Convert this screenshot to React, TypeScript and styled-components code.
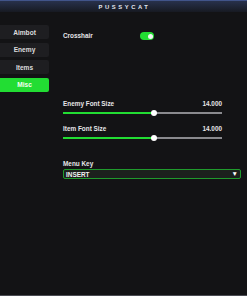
import styled, { createGlobalStyle } from "styled-components";

const GlobalStyle = createGlobalStyle`
  html, body {
    margin: 0;
    padding: 0;
    background: #121214;
  }
  #root {
    width: 247px;
    height: 296px;
  }
`;

const Window = styled.div`
  display: flex;
  flex-direction: column;
  width: 247px;
  height: 296px;
  box-sizing: border-box;
  background: #131315;
  border-bottom: 1px solid #4a4b52;
  font-family: "Liberation Sans", Arial, sans-serif;
  font-weight: 700;
  color: #e6e6e8;
  overflow: hidden;
`;

const TitleBar = styled.div`
  display: flex;
  align-items: center;
  justify-content: center;
  height: 12px;
  box-sizing: border-box;
  border-top: 1px solid #41548a;
  background: linear-gradient(#28314c, #171a22);
  font-size: 5.8px;
  letter-spacing: 2.6px;
  color: #e4e7ef;
  padding-left: 2px;
`;

const Main = styled.div`
  display: flex;
  flex: 1;
`;

const Sidebar = styled.div`
  display: flex;
  flex-direction: column;
  gap: 3.5px;
  width: 49px;
  padding-top: 13px;
`;

const TabButton = styled.div<{ $active?: boolean }>`
  display: flex;
  align-items: center;
  justify-content: center;
  height: 14px;
  border-radius: 0 2px 2px 0;
  font-size: 6.6px;
  background: ${(p) => (p.$active ? "#22dd33" : "#1e1e21")};
  color: ${(p) => (p.$active ? "#f4fff4" : "#dcdcde")};
`;

const Content = styled.div`
  display: flex;
  flex-direction: column;
  padding: 20px 0 0 14px;
`;

const ToggleRow = styled.div`
  display: flex;
  align-items: center;
  justify-content: space-between;
  width: 91px;
  height: 8px;
`;

const Label = styled.span`
  font-size: 6.4px;
  line-height: 8px;
`;

const Toggle = styled.div<{ $on?: boolean }>`
  position: relative;
  width: 14px;
  height: 8px;
  border-radius: 4px;
  background: ${(p) => (p.$on ? "#22dd33" : "#444")};

  &::after {
    content: "";
    position: absolute;
    top: 1.5px;
    left: ${(p) => (p.$on ? "8px" : "1.5px")};
    width: 5px;
    height: 5px;
    border-radius: 50%;
    background: #f4f4f4;
  }
`;

const SliderGroup = styled.div<{ $top: number }>`
  display: flex;
  flex-direction: column;
  width: 159px;
  margin-top: ${(p) => p.$top}px;
`;

const LabelRow = styled.div`
  display: flex;
  justify-content: space-between;
  height: 8px;
`;

const Track = styled.div`
  position: relative;
  height: 6px;
  margin-top: 2px;

  &::before {
    content: "";
    position: absolute;
    left: 0;
    right: 0;
    top: 2px;
    height: 2px;
    background: #8a8a8e;
  }
`;

const Fill = styled.div`
  position: absolute;
  left: 0;
  top: 2px;
  height: 2px;
  background: #22dd33;
`;

const Knob = styled.div`
  position: absolute;
  top: 0;
  width: 6px;
  height: 6px;
  margin-left: -3px;
  border-radius: 50%;
  background: #ffffff;
`;

const KeyGroup = styled.div`
  display: flex;
  flex-direction: column;
  width: 178px;
  margin-top: 19px;
`;

const Select = styled.div`
  display: flex;
  align-items: center;
  justify-content: space-between;
  height: 10px;
  margin-top: 1px;
  box-sizing: border-box;
  padding: 0 2px 0 2px;
  border: 1px solid #1f9a2c;
  border-radius: 2px;
  background: #1c201d;
  font-size: 6.4px;
  color: #f2f2f2;
`;

const Arrow = styled.span`
  font-size: 6.5px;
  line-height: 6px;
  color: #ffffff;
`;

const Slider = ({ label, value, min, max, top }: { label: string; value: number; min: number; max: number; top: number }) => {
  const pct = ((value - min) / (max - min)) * 100;
  return (
    <SliderGroup $top={top}>
      <LabelRow>
        <Label>{label}</Label>
        <Label>{value.toFixed(3)}</Label>
      </LabelRow>
      <Track>
        <Fill style={{ width: `${pct}%` }} />
        <Knob style={{ left: `${pct}%` }} />
      </Track>
    </SliderGroup>
  );
};

const tabs = ["Aimbot", "Enemy", "Items", "Misc"];

export default function App() {
  return (
    <>
      <GlobalStyle />
      <Window>
        <TitleBar>PUSSYCAT</TitleBar>
        <Main>
          <Sidebar>
            {tabs.map((t) => (
              <TabButton key={t} $active={t === "Misc"}>
                {t}
              </TabButton>
            ))}
          </Sidebar>
          <Content>
            <ToggleRow>
              <Label>Crosshair</Label>
              <Toggle $on />
            </ToggleRow>
            <Slider label="Enemy Font Size" value={14} min={6} max={20} top={60} />
            <Slider label="Item Font Size" value={14} min={6} max={20} top={9} />
            <KeyGroup>
              <Label>Menu Key</Label>
              <Select>
                <span>INSERT</span>
                <Arrow>▼</Arrow>
              </Select>
            </KeyGroup>
          </Content>
        </Main>
      </Window>
    </>
  );
}
